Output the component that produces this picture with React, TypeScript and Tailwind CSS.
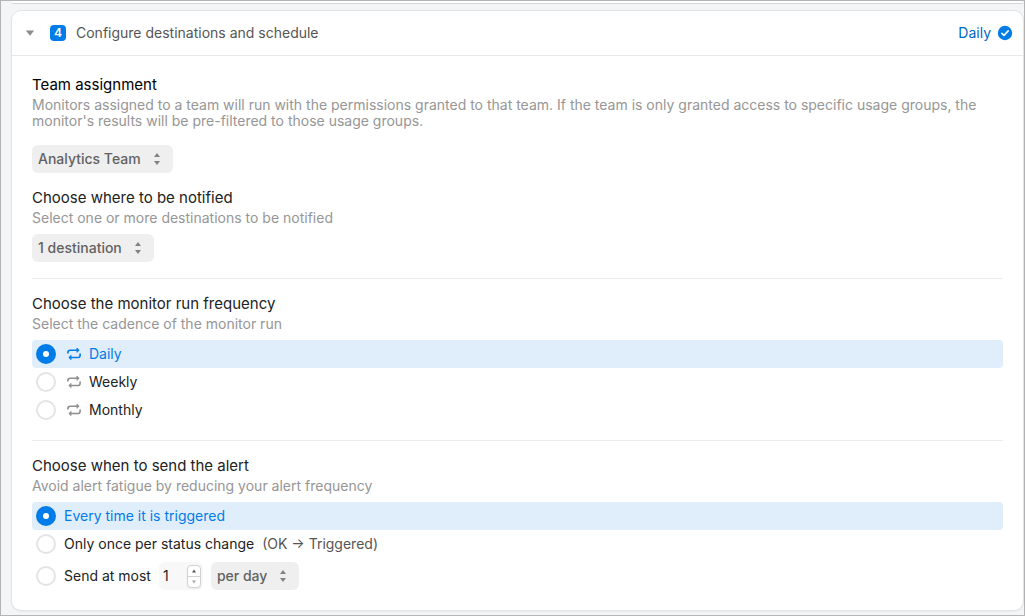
import { useState } from "react"
import type { ReactNode } from "react"
import clsx from "clsx"

const frequencies = ["Daily", "Weekly", "Monthly"]

const radioClass =
  "size-5 shrink-0 appearance-none rounded-full border-2 border-[#e4e4e4] bg-white checked:border-[7px] checked:border-[#007ce8]"

function Section({ title, description, children, dark, last }: {
  title: string
  description: string
  children: ReactNode
  dark?: boolean
  last?: boolean
}) {
  return (
    <section className={clsx("pt-[13px]", last && "pb-5")}>
      <h3 className={clsx("text-[15px] leading-6", dark ? "text-black" : "text-[#222]")}>{title}</h3>
      <p className="text-sm leading-4 text-[#969696]">{description}</p>
      {children}
    </section>
  )
}

function Dropdown({ label, options }: { label: string; options: string[] }) {
  return (
    <span className="relative inline-flex">
      <select
        aria-label={label}
        className="h-7 field-sizing-content appearance-none rounded-md bg-[#efefef] pr-8 pl-1.5 text-sm font-medium text-[#626262]"
      >
        {options.map((o) => (
          <option key={o}>{o}</option>
        ))}
      </select>
      <svg className="pointer-events-none absolute top-2 right-3 h-3 w-2" viewBox="0 0 8 12" fill="#828282">
        <path d="M4 0 7 4H1zM4 12 1 8h6z" />
      </svg>
    </span>
  )
}

function RepeatIcon() {
  return (
    <svg
      className="ml-[3px] h-3.5 w-3.5 shrink-0"
      viewBox="0 0 14 14"
      fill="none"
      stroke="currentColor"
      strokeWidth="1.6"
      strokeLinecap="round"
      strokeLinejoin="round"
    >
      <path d="M0.9 6V5.5Q0.9 3.2 3.2 3.2H10.8M13.1 7v1.2q0 2.3-2.3 2.3H3.2" />
      <path d="M10.2 1.3 12.2 3.2 10.2 5.1zM3.8 8.6 1.8 10.5 3.8 12.4z" fill="currentColor" strokeWidth="0.8" />
    </svg>
  )
}

export default function App() {
  const [frequency, setFrequency] = useState("Daily")
  const [alert, setAlert] = useState("every")
  const [count, setCount] = useState(1)

  return (
    <div className="border border-[#b4b4b6] bg-[#f4f5f6] pb-1 pl-2.5 font-['Inter',sans-serif] text-sm text-[#222]">
      <div className="h-[3px] rounded-b-lg border-b border-[#d4d5d7] bg-white" />

      <main className="mt-1.5 rounded-[10px] border border-[#e2e3e5] bg-white shadow-xs">
        <header className="flex h-[45px] items-center border-b border-[#e8e9ea] pr-2.5 pl-[13px]">
          <button aria-label="Collapse step" className="text-[#8c8c8c]">
            <svg className="h-2 w-2.5" viewBox="0 0 10 8" fill="currentColor">
              <path d="M0.8 1.5h8.4L5 6.8z" />
            </svg>
          </button>
          <span className="ml-[15px] flex size-4 items-center justify-center rounded bg-[#007ce8] text-xs font-semibold text-white">
            4
          </span>
          <h2 className="ml-2.5 text-[#555]">Configure destinations and schedule</h2>
          <span className="ml-auto text-[#0068c8]">Daily</span>
          <svg className="ml-1.5 size-4" viewBox="0 0 16 16" fill="none">
            <circle cx="8" cy="8" r="7.2" fill="#007ce8" />
            <path d="M4.8 8.3 7 10.4 11.2 5.9" stroke="white" strokeWidth="1.6" strokeLinecap="round" strokeLinejoin="round" />
          </svg>
        </header>

        <div className="px-5 pt-1">
          <Section
            dark
            title="Team assignment"
            description="Monitors assigned to a team will run with the permissions granted to that team. If the team is only granted access to specific usage groups, the monitor's results will be pre-filtered to those usage groups."
          >
            <div className="mt-4 flex">
              <Dropdown label="Team" options={["Analytics Team"]} />
            </div>
          </Section>

          <Section title="Choose where to be notified" description="Select one or more destinations to be notified">
            <div className="mt-2 flex">
              <Dropdown label="Destinations" options={["1 destination"]} />
            </div>
          </Section>

          <hr className="mt-4 border-[#ededed]" />

          <Section title="Choose the monitor run frequency" description="Select the cadence of the monitor run">
            <div className="mt-2">
              {frequencies.map((f) => (
                <label
                  key={f}
                  className={clsx(
                    "flex h-7 items-center gap-2 rounded px-1",
                    frequency === f && "bg-[#e0eefc] text-[#007ce8]"
                  )}
                >
                  <input
                    type="radio"
                    name="frequency"
                    className={radioClass}
                    checked={frequency === f}
                    onChange={() => setFrequency(f)}
                  />
                  <span className={frequency === f ? "text-[#007ce8]" : "text-[#8f8f8f]"}>
                    <RepeatIcon />
                  </span>
                  <span>{f}</span>
                </label>
              ))}
            </div>
          </Section>

          <hr className="mt-4 border-[#ededed]" />

          <Section last title="Choose when to send the alert" description="Avoid alert fatigue by reducing your alert frequency">
            <div className="mt-2">
              <label
                className={clsx(
                  "flex h-7 items-center gap-2 rounded px-1",
                  alert === "every" && "bg-[#e0eefc] text-[#007ce8]"
                )}
              >
                <input
                  type="radio"
                  name="alert"
                  className={radioClass}
                  checked={alert === "every"}
                  onChange={() => setAlert("every")}
                />
                Every time it is triggered
              </label>
              <label className={clsx("flex h-7 items-center gap-2 rounded px-1", alert === "once" && "bg-[#e0eefc]")}>
                <input
                  type="radio"
                  name="alert"
                  className={radioClass}
                  checked={alert === "once"}
                  onChange={() => setAlert("once")}
                />
                Only once per status change
                <span className="text-[#555]">(OK → Triggered)</span>
              </label>
              <div className="mt-1 flex h-7 items-center gap-2 pl-1">
                <label className="flex items-center gap-2">
                  <input
                    type="radio"
                    name="alert"
                    className={radioClass}
                    checked={alert === "limit"}
                    onChange={() => setAlert("limit")}
                  />
                  Send at most
                </label>
                <div className="flex h-7 w-11 items-center rounded-md bg-[#f8f8f8] pr-0.5 pl-1">
                  <input
                    aria-label="Number of alerts"
                    inputMode="numeric"
                    className="min-w-0 flex-1 bg-transparent"
                    value={count}
                    onChange={(e) => setCount(Number(e.target.value) || 1)}
                  />
                  <div className="flex h-[23px] w-3.5 flex-col rounded-sm border border-[#d2d2d2] bg-white shadow-xs">
                    <button
                      aria-label="Increase"
                      className="flex flex-1 items-center justify-center border-b border-[#d2d2d2]"
                      onClick={() => setCount(count + 1)}
                    >
                      <svg className="h-1 w-1.5" viewBox="0 0 6 4" fill="#555"><path d="M3 0.5 5 3.5H1z" /></svg>
                    </button>
                    <button
                      aria-label="Decrease"
                      className="flex flex-1 items-center justify-center"
                      onClick={() => setCount(Math.max(1, count - 1))}
                    >
                      <svg className="h-1 w-1.5" viewBox="0 0 6 4" fill="#aaa"><path d="M3 3.5 1 0.5h4z" /></svg>
                    </button>
                  </div>
                </div>
                <Dropdown label="Period" options={["per day"]} />
              </div>
            </div>
          </Section>
        </div>
      </main>
    </div>
  )
}
